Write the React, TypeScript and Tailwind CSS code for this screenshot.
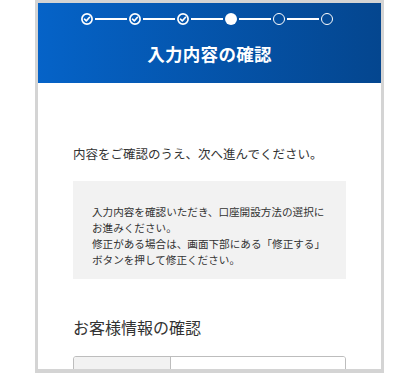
import React from 'react'

const font = { fontFamily: '"Noto Sans CJK JP", "Noto Sans", sans-serif' }

function StepDone() {
    return (
        <svg width="12" height="12" viewBox="0 0 12 12" className="shrink-0">
            <circle cx="6" cy="6" r="5.1" fill="none" stroke="white" strokeWidth="1.7" />
            <path d="M3.5 6.2 L5.3 7.9 L8.5 4.3" fill="none" stroke="white" strokeWidth="1.6" strokeLinecap="round" strokeLinejoin="round" />
        </svg>
    )
}

function StepCurrent() {
    return <div className="w-3 h-3 rounded-full bg-white shrink-0" />
}

function StepTodo() {
    return <div className="w-3 h-3 rounded-full border-[1.7px] border-white shrink-0" />
}

function Line() {
    return <div className="w-[32px] h-[1.5px] bg-white mx-[2px] shrink-0" />
}

export default function App() {
    return (
        <div className="w-[420px] h-[373px] bg-white overflow-hidden" style={font}>
            <div className="ml-[35px] w-[349px] h-[373px] border-x-[3px] border-t-[3px] border-b-[4px] border-[#d4d4d4] overflow-hidden flex flex-col">
                {/* Header */}
                <div className="h-[80px] shrink-0 bg-linear-to-r from-[#0563c8] to-[#04468f] flex flex-col items-center">
                    <div className="flex items-center mt-[10px] pr-[5px]">
                        <StepDone />
                        <Line />
                        <StepDone />
                        <Line />
                        <StepDone />
                        <Line />
                        <StepCurrent />
                        <Line />
                        <StepTodo />
                        <Line />
                        <StepTodo />
                    </div>
                    <h1 className="mt-[16px] text-white text-[17.5px] font-bold leading-[26px] tracking-[0.3px]">入力内容の確認</h1>
                </div>

                {/* Body */}
                <div className="px-[35px] text-[#333]">
                    <p className="mt-[61px] text-[12.5px] leading-[20px]">内容をご確認のうえ、次へ進んでください。</p>

                    <div className="mt-[17px] h-[98px] bg-[#f2f2f2] pl-[19px] pr-[10px] pt-[23px]">
                        <p className="text-[10.6px] leading-[16px]">
                            入力内容を確認いただき、口座開設方法の選択に<br />
                            お進みください。<br />
                            修正がある場合は、画面下部にある「修正する」<br />
                            ボタンを押して修正ください。
                        </p>
                    </div>

                    <h2 className="mt-[36px] text-[16px] leading-[24px] font-normal">お客様情報の確認</h2>

                    <div className="mt-[17px] h-[40px] border border-[#bdbdbd] rounded-t-[3px] flex overflow-hidden">
                        <div className="w-[97px] bg-[#f2f2f2] border-r border-[#bdbdbd]" />
                        <div className="flex-1 bg-white" />
                    </div>
                </div>
            </div>
        </div>
    )
}
